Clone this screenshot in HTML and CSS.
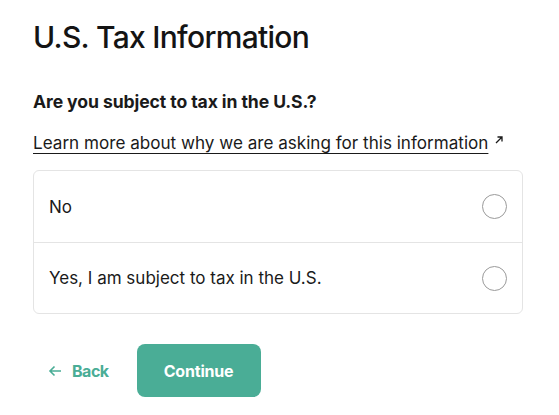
FILE: index.html
```html
<!DOCTYPE html>
<html lang="en">
<head>
<meta charset="utf-8">
<link rel="stylesheet" href="styles.css">
</head>
<body>
<main class="page">
  <h1 class="title">U.S. Tax Information</h1>
  <h2 class="question">Are you subject to tax in the U.S.?</h2>
  <p class="learn"><a class="learn-link" href="#">Learn more about why we are asking for this information</a><svg class="ext" width="10" height="10" viewBox="0 0 10 10"><path d="M2 8 L8 2 M3.5 2 H8 V6.5" fill="none" stroke="#1a1a1a" stroke-width="1.3"/></svg></p>
  <div class="options">
    <label class="option"><span class="option-text">No</span><span class="radio"></span></label>
    <label class="option"><span class="option-text">Yes, I am subject to tax in the U.S.</span><span class="radio"></span></label>
  </div>
  <div class="actions">
    <button class="back"><svg width="14" height="12" viewBox="0 0 14 12"><path d="M13 6 H2 M6.5 1.5 L2 6 L6.5 10.5" fill="none" stroke="#4aad96" stroke-width="1.6"/></svg><span>Back</span></button>
    <button class="continue">Continue</button>
  </div>
</main>
</body>
</html>
```
FILE: styles.css
```css
* { box-sizing: border-box; }
html, body { margin: 0; background: #fff; }
body { font-family: Inter, "Noto Sans", sans-serif; color: #1a1a1a; }
.page { padding: 17px 36px 0 33px; }
.title { margin: 0; font-size: 30px; font-weight: 550; line-height: 40px; letter-spacing: -0.7px; color: #141414; }
.question { margin: 34px 0 0; font-size: 17.6px; font-weight: 700; line-height: 22px; letter-spacing: -0.1px; }
.learn { margin: 19px 0 0; font-size: 17.1px; line-height: 22px; display: flex; align-items: center; gap: 6px; }
.learn-link { color: #1a1a1a; text-decoration: underline; text-underline-offset: 4px; text-decoration-thickness: 1px; }
.ext { margin-top: -6px; }
.options { margin-top: 16px; border: 1px solid #e4e4e4; border-radius: 6px; display: flex; flex-direction: column; }
.option { display: flex; align-items: center; justify-content: space-between; height: 71px; padding: 0 15px 0 15px; font-size: 17px; }
.option + .option { border-top: 1px solid #e4e4e4; }
.radio { width: 25px; height: 25px; border: 1px solid #9a9a9a; border-radius: 50%; }
.actions { margin-top: 30px; display: flex; align-items: center; gap: 28px; }
.back { display: flex; align-items: center; gap: 10px; background: none; border: 0; padding: 0 0 0 15px; font: inherit; font-size: 16px; font-weight: 700; color: #4aad96; letter-spacing: -0.5px; }
.continue { width: 124px; height: 53px; border: 0; border-radius: 8px; background: #4aad96; color: #fff; font: inherit; font-size: 16px; font-weight: 700; letter-spacing: -0.2px; }
```
